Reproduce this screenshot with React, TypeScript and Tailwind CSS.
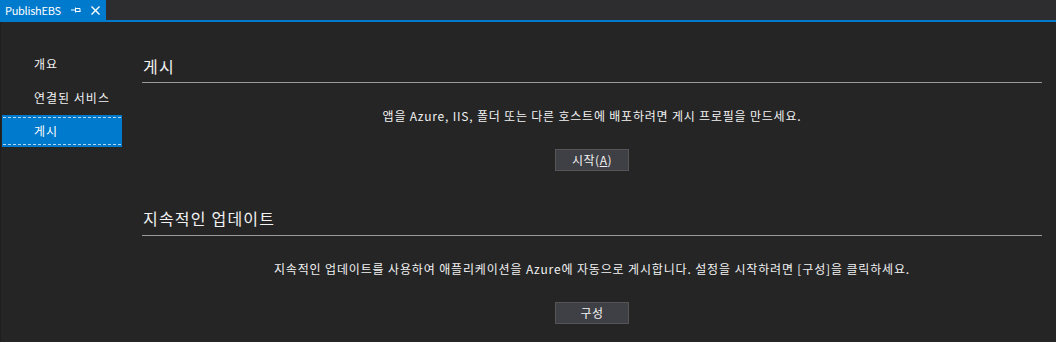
import React from 'react';

const font = { fontFamily: '"Noto Sans CJK KR", "Noto Sans", sans-serif' };

function PinIcon() {
  return (
    <svg width="10" height="8" viewBox="0 0 10 8" className="shrink-0">
      <path d="M0 4h4" stroke="#fff" strokeWidth="1" />
      <path d="M4.5 1.5v5M4.5 2.5h4.5v3h-4.5M4.5 5.5h5" stroke="#fff" strokeWidth="1" fill="none" />
    </svg>
  );
}

function CloseIcon() {
  return (
    <svg width="9" height="9" viewBox="0 0 9 9" className="shrink-0">
      <path d="M0.5 0.5l8 8M8.5 0.5l-8 8" stroke="#fff" strokeWidth="1.4" />
    </svg>
  );
}

export default function App() {
  return (
    <div className="w-[1056px] h-[342px] bg-[#252526] overflow-hidden text-[#f1f1f1]" style={font}>
      {/* tab strip */}
      <div className="h-5 bg-[#2d2d30] flex">
        <div className="h-5 w-[106px] bg-[#007acc] flex items-center pl-[5px] pr-2 gap-[10px]">
          <span className="text-[11px] leading-none text-white tracking-tight">PublishEBS</span>
          <div className="flex items-center gap-[10px] ml-auto">
            <PinIcon />
            <CloseIcon />
          </div>
        </div>
      </div>
      <div className="h-[2px] bg-[#007acc]" />

      <div className="flex h-[320px] border-l border-[#1e1e1e]">
        {/* sidebar */}
        <div className="w-[141px] shrink-0 pt-[25px] pl-px text-xs tracking-[1px]">
          <div className="w-[120px] h-[33px] flex items-center pl-8">개요</div>
          <div className="w-[120px] h-[35px] flex items-center pl-8">연결된 서비스</div>
          <div className="w-[120px] h-8 bg-[#007acc] pt-[2px]">
            <div className="mx-px h-[28px] border-y border-dashed border-white/70 flex items-center pl-[31px] text-white">
              게시
            </div>
          </div>
        </div>

        {/* content */}
        <div className="w-[900px] flex flex-col">
          <div className="mt-[33px] pb-[5px] border-b border-[#9a9a9a] text-base leading-[22px] pl-px tracking-[1.2px]">게시</div>
          <p className="mt-[25px] text-xs leading-4 text-center tracking-[0.8px]">
            앱을 Azure, IIS, 폴더 또는 다른 호스트에 배포하려면 게시 프로필을 만드세요.
          </p>
          <div className="mt-[25px] flex justify-center">
            <button className="w-[74px] h-[22px] bg-[#3f3f46] border border-[#555555] text-xs text-[#f1f1f1] leading-none tracking-[0.5px]">
              시작(<span className="underline">A</span>)
            </button>
          </div>

          <div className="mt-[36px] pb-[6px] border-b border-[#9a9a9a] text-base leading-[22px] pl-px tracking-[1.2px]">지속적인 업데이트</div>
          <p className="mt-[25px] text-xs leading-4 text-center tracking-[0.85px]">
            지속적인 업데이트를 사용하여 애플리케이션을 Azure에 자동으로 게시합니다. 설정을 시작하려면 [구성]을 클릭하세요.
          </p>
          <div className="mt-[25px] flex justify-center">
            <button className="w-[74px] h-[22px] bg-[#3f3f46] border border-[#555555] text-xs text-[#f1f1f1] leading-none tracking-[0.5px]">
              구성
            </button>
          </div>
        </div>
      </div>
    </div>
  );
}
